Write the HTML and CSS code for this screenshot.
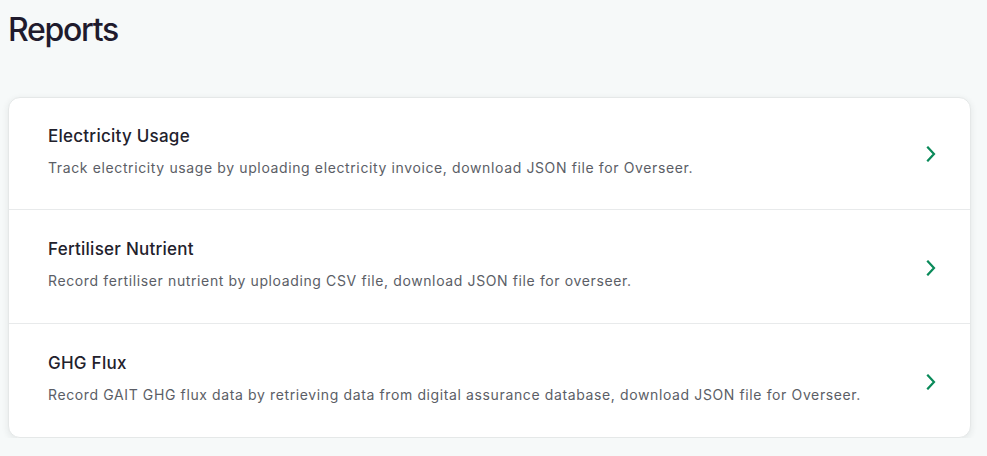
FILE: index.html
```html
<!DOCTYPE html>
<html lang="en">
<head>
<meta charset="utf-8">
<title>Reports</title>
<link rel="stylesheet" href="styles.css">
</head>
<body>
<main class="page">
  <h1 class="page-title">Reports</h1>
  <div class="card">
    <a class="report-row" href="#">
      <div class="report-text">
        <div class="report-name">Electricity Usage</div>
        <div class="report-desc">Track electricity usage by uploading electricity invoice, download JSON file for Overseer.</div>
      </div>
      <svg class="chevron" width="10" height="16" viewBox="0 0 10 16"><path d="M2 1.5 L8 8 L2 14.5" fill="none" stroke="currentColor" stroke-width="2.2" stroke-linecap="square" stroke-linejoin="miter"/></svg>
    </a>
    <a class="report-row" href="#">
      <div class="report-text">
        <div class="report-name">Fertiliser Nutrient</div>
        <div class="report-desc">Record fertiliser nutrient by uploading CSV file, download JSON file for overseer.</div>
      </div>
      <svg class="chevron" width="10" height="16" viewBox="0 0 10 16"><path d="M2 1.5 L8 8 L2 14.5" fill="none" stroke="currentColor" stroke-width="2.2" stroke-linecap="square" stroke-linejoin="miter"/></svg>
    </a>
    <a class="report-row" href="#">
      <div class="report-text">
        <div class="report-name">GHG Flux</div>
        <div class="report-desc">Record GAIT GHG flux data by retrieving data from digital assurance database, download JSON file for Overseer.</div>
      </div>
      <svg class="chevron" width="10" height="16" viewBox="0 0 10 16"><path d="M2 1.5 L8 8 L2 14.5" fill="none" stroke="currentColor" stroke-width="2.2" stroke-linecap="square" stroke-linejoin="miter"/></svg>
    </a>
  </div>
</main>
</body>
</html>
```
FILE: styles.css
```css
* { box-sizing: border-box; }
html, body { margin: 0; padding: 0; }
body {
  background: #f6f9f9;
  font-family: Inter, "Noto Sans", sans-serif;
  color: #1f1d2b;
}
.page {
  padding: 10px 16px 0 8px;
}
.page-title {
  margin: 0 0 47px;
  font-size: 32px;
  line-height: 40px;
  font-weight: 500;
  letter-spacing: -1.3px;
  color: #1f1b2d;
}
.card {
  background: #fff;
  border: 1px solid #e5e8e8;
  border-radius: 12px;
  box-shadow: 0 2px 7px rgba(30, 40, 40, 0.09);
  overflow: hidden;
}
.report-row {
  display: flex;
  align-items: center;
  height: 111px;
  padding: 26px 34px 31px 39px;
  text-decoration: none;
  color: inherit;
}
.report-row + .report-row {
  border-top: 1px solid #e8eaeb;
  height: 114px;
  padding-top: 27px;
}
.report-text {
  flex: 1;
  align-self: flex-start;
}
.report-name {
  font-size: 17px;
  line-height: 24px;
  font-weight: 500;
  color: #22212c;
  letter-spacing: 0.25px;
}
.report-desc {
  margin-top: 10px;
  font-size: 14px;
  line-height: 20px;
  color: #5b5e66;
  letter-spacing: 0.62px;
}
.chevron {
  color: #0a8a5a;
  flex: none;
  margin-top: 6px;
}
```
